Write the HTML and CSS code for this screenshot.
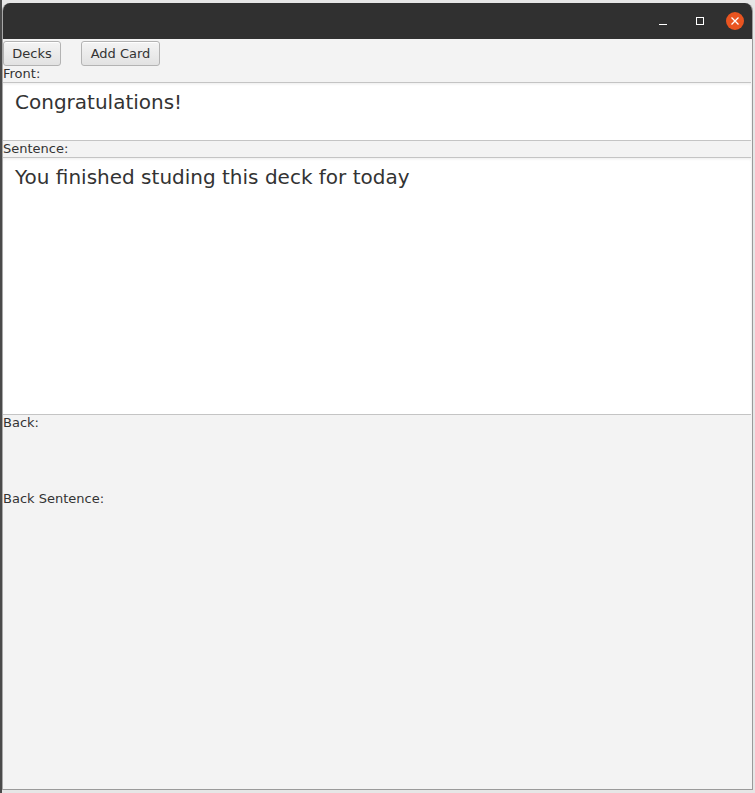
FILE: index.html
```html
<!DOCTYPE html>
<html>
<head>
<meta charset="utf-8">
<link rel="stylesheet" href="styles.css">
</head>
<body>
<div class="desktop">
  <div class="window">
    <div class="titlebar">
      <span class="ctl min"></span>
      <span class="ctl max"></span>
      <span class="ctl close">
        <svg width="18" height="18" viewBox="0 0 18 18"><path d="M5.5 5.5 L12.5 12.5 M12.5 5.5 L5.5 12.5" stroke="#fff" stroke-width="1.3" fill="none"/></svg>
      </span>
    </div>
    <div class="content">
      <div class="toolbar">
        <button class="btn decks">Decks</button>
        <button class="btn add">Add Card</button>
      </div>
      <div class="label">Front:</div>
      <div class="area front">Congratulations!</div>
      <div class="label">Sentence:</div>
      <div class="area sentence">You finished studing this deck for today</div>
      <div class="label">Back:</div>
      <div class="spacer"></div>
      <div class="label">Back Sentence:</div>
    </div>
  </div>
</div>
</body>
</html>
```
FILE: styles.css
```css
html, body {
  margin: 0;
  padding: 0;
}
body {
  width: 755px;
  height: 793px;
  overflow: hidden;
  background: #ececec;
  font-family: "DejaVu Sans", sans-serif;
}
.desktop {
  width: 755px;
  height: 793px;
  padding: 3px 0 0 2px;
  box-sizing: border-box;
  background: linear-gradient(to right, #4a4a4a 0, #4a4a4a 2px, #e6e6e6 2px);
}
.window {
  width: 751px;
  height: 787px;
  display: flex;
  flex-direction: column;
  border-radius: 8px 8px 0 0;
  overflow: hidden;
  box-sizing: border-box;
  border-right: 1px solid #9a9a9a;
  border-bottom: 1px solid #9a9a9a;
  border-left: 1px solid #a8a8a8;
  background: #f3f3f3;
}
.titlebar {
  height: 36px;
  flex: none;
  background: #303030;
  display: flex;
  align-items: center;
  justify-content: flex-end;
  padding-right: 8px;
}
.ctl {
  display: block;
  box-sizing: border-box;
}
.min {
  width: 8px;
  height: 1px;
  background: #fff;
  margin-top: 6px;
  margin-right: 29px;
}
.max {
  width: 8px;
  height: 8px;
  border: 1px solid #fff;
  margin-right: 22px;
  margin-top: -1px;
}
.close {
  width: 18px;
  height: 18px;
  border-radius: 50%;
  background: #e95420;
  display: flex;
  margin-top: -1px;
}
.content {
  flex: 1;
  display: flex;
  flex-direction: column;
  background: #f3f3f3;
  color: #333;
}
.toolbar {
  display: flex;
  gap: 20px;
  padding: 2px 0 0 0;
  height: 27px;
  box-sizing: border-box;
}
.btn {
  font-family: "DejaVu Sans", sans-serif;
  font-size: 13px;
  color: #333;
  height: 25px;
  padding: 0 8px;
  border: 1px solid #b3b3b3;
  border-radius: 3px;
  background: linear-gradient(#f4f4f4, #e2e2e2);
  box-shadow: inset 0 1px 0 #fff;
  margin: 0;
  line-height: 21px;
}
.decks { width: 58px; }
.add { width: 79px; }
.label {
  font-size: 13px;
  line-height: 16px;
  height: 16px;
  padding-left: 0;
  color: #333;
}
.area {
  background: #fff;
  border-top: 1px solid #c4c4c4;
  border-bottom: 1px solid #c4c4c4;
  margin-right: 1px;
  box-sizing: border-box;
  font-size: 20px;
  color: #333;
  padding: 6px 0 0 12px;
  line-height: 26px;
  box-shadow: inset 0 2px 3px -1px rgba(0,0,0,0.08);
}
.front { height: 59px; }
.sentence { height: 258px; }
.spacer { height: 60px; }
```
